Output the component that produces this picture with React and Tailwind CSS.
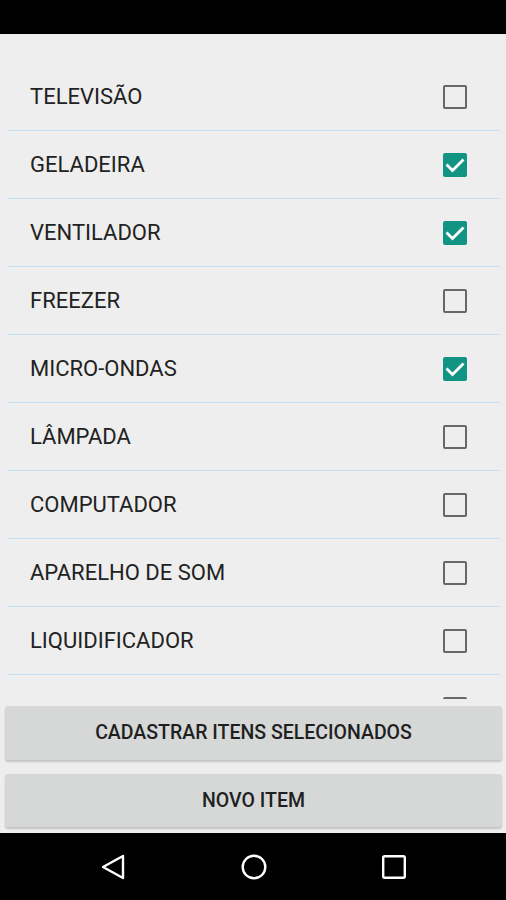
import { useState } from "react";

const initialItems = [
  { name: "TELEVISÃO", checked: false },
  { name: "GELADEIRA", checked: true },
  { name: "VENTILADOR", checked: true },
  { name: "FREEZER", checked: false },
  { name: "MICRO-ONDAS", checked: true },
  { name: "LÂMPADA", checked: false },
  { name: "COMPUTADOR", checked: false },
  { name: "APARELHO DE SOM", checked: false },
  { name: "LIQUIDIFICADOR", checked: false },
  { name: "", checked: false },
];

const CheckBox = ({ checked, onClick }) => (
  <button
    onClick={onClick}
    className={`flex h-[24px] w-[24px] items-center justify-center rounded-[2px] ${
      checked ? "bg-[#119483]" : "border-[2px] border-[#676767]"
    }`}
  >
    {checked && (
      <svg viewBox="0 0 24 24" className="h-[24px] w-[24px]">
        <path
          d="M4.5 12.5l5 5L19.5 7.5"
          fill="none"
          stroke="white"
          strokeWidth="2.8"
          strokeLinecap="square"
        />
      </svg>
    )}
  </button>
);

export default function App() {
  const [items, setItems] = useState(initialItems);

  const toggle = (i) =>
    setItems((current) =>
      current.map((item, idx) =>
        idx === i ? { ...item, checked: !item.checked } : item
      )
    );

  return (
    <div
      className="flex h-[900px] w-[506px] flex-col bg-[#eeeeee]"
      style={{ fontFamily: "Roboto, 'Liberation Sans', sans-serif" }}
    >
      {/* status bar */}
      <div className="h-[34px] bg-black" />

      {/* list */}
      <div className="h-[665px] overflow-hidden pl-[8px] pr-[6px] pt-[29px]">
        {items.map((item, i) => (
          <div
            key={i}
            className="flex h-[68px] items-center justify-between border-b-[1.5px] border-[#c6e0f3] pl-[22px] pr-[33px]"
          >
            <span className="text-[22px] text-[#222222]">{item.name}</span>
            <CheckBox checked={item.checked} onClick={() => toggle(i)} />
          </div>
        ))}
      </div>

      {/* buttons */}
      <div className="flex flex-col gap-[14px] pl-[5px] pr-[4px] pt-[7px]">
        <button className="h-[54px] rounded-[3px] bg-[#d6d7d7] text-[19.5px] font-medium text-[#1f1f1f] shadow-[0_2px_2px_rgba(0,0,0,0.18)]">
          CADASTRAR ITENS SELECIONADOS
        </button>
        <button className="h-[53px] rounded-[3px] bg-[#d6d7d7] text-[19.5px] font-medium text-[#1f1f1f] shadow-[0_2px_2px_rgba(0,0,0,0.18)]">
          NOVO ITEM
        </button>
      </div>

      <div className="flex-1" />

      {/* navigation bar */}
      <div className="flex h-[67px] items-center justify-between bg-black pl-[101px] pr-[100px]">
        <svg viewBox="0 0 24 26" className="h-[26px] w-[24px]">
          <path
            d="M22 2L2 13l20 11z"
            fill="none"
            stroke="white"
            strokeWidth="2.4"
            strokeLinejoin="round"
          />
        </svg>
        <svg viewBox="0 0 26 26" className="h-[26px] w-[26px]">
          <circle cx="13" cy="13" r="11.3" fill="none" stroke="white" strokeWidth="2.4" />
        </svg>
        <svg viewBox="0 0 24 24" className="h-[24px] w-[24px]">
          <rect x="1.2" y="1.2" width="21.6" height="21.6" rx="1.5" fill="none" stroke="white" strokeWidth="2.4" />
        </svg>
      </div>
    </div>
  );
}
